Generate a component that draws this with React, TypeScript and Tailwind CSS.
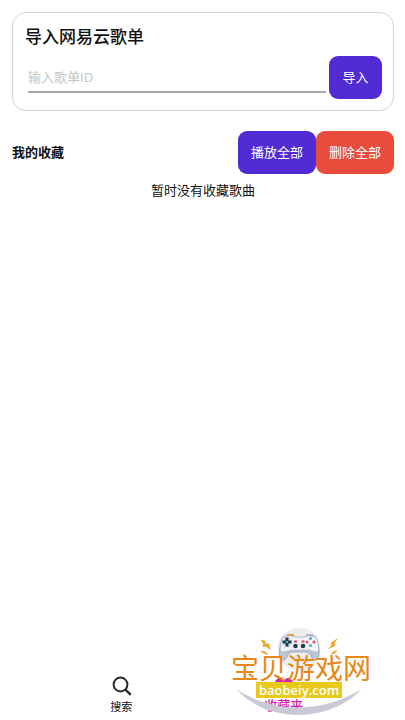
import React from 'react';

const solidButton = 'h-[43px] shrink-0 rounded-[9px] text-[13px] text-white';

function ImportCard() {
  return (
    <section className="rounded-[14px] border border-[#d4d4d4] pt-3 pr-[11px] pb-[11px] pl-3">
      <h1 className="text-[17px] leading-6 font-medium">导入网易云歌单</h1>
      <form className="mt-[7px] flex items-center" onSubmit={(e) => e.preventDefault()}>
        <input
          aria-label="输入歌单ID"
          placeholder="输入歌单ID"
          className="mx-[3px] h-[30px] min-w-0 flex-1 border-b-2 border-[#a6a6a6] text-[13px] outline-none placeholder:text-[#c6c6c6]"
        />
        <button type="submit" className={solidButton + ' w-[53px] bg-[#512bd4]'}>导入</button>
      </form>
    </section>
  );
}

function SearchIcon() {
  return (
    <svg aria-hidden="true" width="22" height="22" viewBox="0 0 22 22" fill="none" stroke="#2b2b2f" strokeWidth="2">
      <circle cx="10.5" cy="9.5" r="6.9" />
      <path d="M15.500 14.600 20.700 19.800" strokeWidth="2.4" />
    </svg>
  );
}

function HeartIcon() {
  return (
    <svg aria-hidden="true" width="22" height="22" viewBox="0 0 22 22" fill="#d61cae">
      <path d="M11 21 4 14C.5 10 1.500 4 6 3.200 8.500 2.800 10 4 11 6c1-2 2.500-3.200 5-2.800 4.500.8 5.500 6.800 2 10.800Z" />
    </svg>
  );
}

function Watermark() {
  return (
    <svg
      aria-label="宝贝游戏网 baobeiy.com"
      className="pointer-events-none absolute right-[33px] bottom-[2px]"
      width="142"
      height="94"
      viewBox="0 0 142 94"
    >
      <circle cx="69" cy="25" r="21.5" fill="#ededed" />
      <path d="M6 65C42 89 92 90 132 65 99 99 38 100 6 65Z" fill="#c9cad6" />
      <g fill="#f2a91f" stroke="#ee9420" strokeWidth="0.6">
        <path d="M31 16 35 17 35.500 20 39 20 40 25.500 36.500 22.500 33 22.500 33.500 19.500Z" />
        <path d="M31 27 34.500 27.500 38 30.500 34 29.500Z" />
        <path d="M107 15 101 19 102 21 99 24.500 105 21.500 104 19.500Z" />
        <path d="M107 27 104 27.500 101 30 105 29Z" />
      </g>
      <path d="M57 12v-2h7v2Z" fill="#eda53d" />
      <path d="M76 12v-2h7v2Z" fill="#b9bfce" />
      <path
        d="M54 12.500C58 11 62 11.500 65 13h9c3-1.500 7-2 11-.5 4 2 5 18 3.500 21.500-1.500 3.500-5.500 3-7-1-1-3-3-5-6-5H63c-3 0-5 2-6 5-1.500 4-5.500 4.500-7 1C48.500 30.500 50 14.500 54 12.500Z"
        fill="#bcc3d2"
        stroke="#98a0b5"
        strokeWidth="0.7"
      />
      <path
        d="M54.500 13C58 12 62 12 65 13.500h9c3-1.500 7-1.500 10.500-.5 3.500 2 4 10 3.500 14-2 1-6 0-9-1.500H61c-3 1.500-8 2.500-10 1.500C50.500 22 51 15 54.500 13Z"
        fill="#f2f3f8"
      />
      <circle cx="57" cy="18" r="5.2" fill="#dfe4ee" />
      <path d="M55.500 13.500h3V16.500h3v3h-3v3h-3v-3h-3v-3h3Z" fill="#20384a" />
      <circle cx="57" cy="18" r="1.2" fill="#5fb5b3" />
      <circle cx="65.5" cy="22" r="2.3" fill="#263a4c" />
      <circle cx="73" cy="22" r="2.3" fill="#263a4c" />
      <path d="M64 16.500h3v2h-3Zm7.500 0h3v2h-3Z" fill="#c74867" />
      <circle cx="80.500" cy="14.500" r="1.5" fill="#4aa9cb" />
      <circle cx="84" cy="18" r="1.5" fill="#e15468" />
      <circle cx="80.500" cy="21.500" r="1.5" fill="#4aa9cb" />
      <circle cx="77" cy="18" r="1.5" fill="#e15468" />
      <text x="1" y="55" fill="#e88718" className="text-[28px] [font-family:'Noto_Sans_CJK_SC',sans-serif]">宝贝游戏网</text>
      <path d="M26 58h86v16H26Z" fill="#e8c91c" />
      <text x="69" y="71" textAnchor="middle" fill="#fff" className="text-[13px] font-semibold [font-family:'Open_Sans',sans-serif]">baobeiy.com</text>
    </svg>
  );
}

export default function App() {
  return (
    <div className="relative flex min-h-screen flex-col bg-white text-[#111] [font-family:'Open_Sans','Noto_Sans_CJK_SC',sans-serif]">
      <main className="flex-1 pt-3 pr-[11px] pl-3">
        <ImportCard />
        <section className="mt-5">
          <header className="flex items-center">
            <h2 className="flex-1 text-[13px] font-bold">我的收藏</h2>
            <button type="button" className={solidButton + ' w-[78px] bg-[#512bd4]'}>播放全部</button>
            <button type="button" className={solidButton + ' w-[78px] bg-[#e74c3c]'}>删除全部</button>
          </header>
          <p className="mt-[6px] text-center text-[13px] leading-5">暂时没有收藏歌曲</p>
        </section>
      </main>
      <nav className="flex px-10 pb-[3px]">
        <a href="#search" className="flex flex-1 flex-col items-center text-[11px] leading-5">
          <SearchIcon />
          搜索
        </a>
        <a href="#favorites" className="flex flex-1 flex-col items-center text-[13px] leading-4 font-medium text-[#d61cae]">
          <HeartIcon />
          收藏夹
        </a>
      </nav>
      <Watermark />
    </div>
  );
}
